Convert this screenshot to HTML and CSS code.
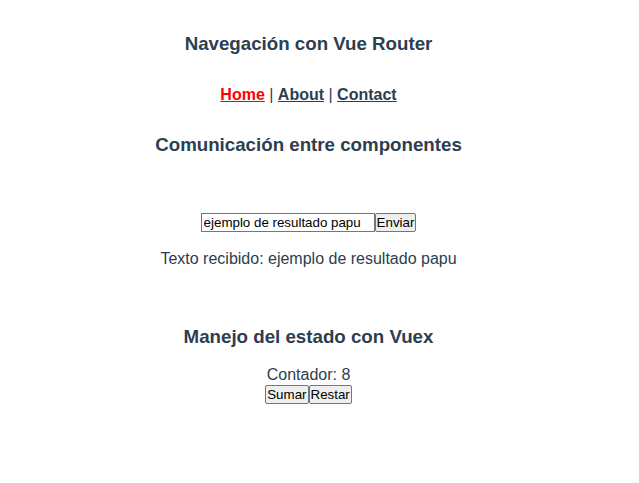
FILE: index.html
```html
<!DOCTYPE html>
<html lang="es">
<head>
<meta charset="utf-8">
<title>Vue App</title>
<link rel="stylesheet" href="styles.css">
</head>
<body>
<div class="app">
  <h3 class="title title-top">Navegación con Vue Router</h3>
  <nav class="nav">
    <a href="#" class="link active">Home</a> | <a href="#" class="link">About</a> | <a href="#" class="link">Contact</a>
  </nav>
  <section class="comm">
    <h3 class="title">Comunicación entre componentes</h3>
    <div class="form-row"><input class="field" type="text" value="ejemplo de resultado papu"><button class="btn">Enviar</button></div>
    <p class="received">Texto recibido: ejemplo de resultado papu</p>
  </section>
  <section class="store">
    <h3 class="title">Manejo del estado con Vuex</h3>
    <div class="counter">Contador: 8</div>
    <div class="btn-row"><button class="btn">Sumar</button><button class="btn">Restar</button></div>
  </section>
</div>
</body>
</html>
```
FILE: styles.css
```css
html, body {
  margin: 0;
  padding: 0;
  background: #ffffff;
}
.app {
  font-family: "Liberation Sans", Arial, Helvetica, sans-serif;
  color: #2c3e50;
  text-align: center;
  padding-top: 33px;
  padding-right: 22px;
}
.title {
  font-size: 18.72px;
  font-weight: bold;
  margin: 0;
  line-height: 21.5px;
}
.nav {
  margin-top: 31px;
  font-size: 16px;
  line-height: 18.5px;
}
.link {
  color: #2c3e50;
  font-weight: bold;
}
.link.active {
  color: #ff0000;
}
.comm {
  margin-top: 30px;
}
.form-row {
  margin-top: 57px;
  display: flex;
  justify-content: center;
}
.field {
  font-family: "Liberation Sans", Arial, sans-serif;
  font-size: 13.333px;
  width: 174px;
  height: 19px;
  box-sizing: border-box;
  padding: 1px 2px;
  border: 1px solid #767676;
  border-radius: 0;
  margin: 0;
  color: #000;
}
.btn {
  font-family: "Liberation Sans", Arial, sans-serif;
  font-size: 13.333px;
  padding: 1px 1px;
  height: 19px;
  box-sizing: border-box;
  border: 1px solid #767676;
  border-radius: 2px;
  background: #efefef;
  color: #000;
  margin: 0;
  line-height: 15px;
}
.received {
  margin: 18px 0 0;
  font-size: 16px;
  line-height: 18.5px;
}
.store {
  margin-top: 58px;
}
.counter {
  margin-top: 18.5px;
  font-size: 16px;
  line-height: 18.5px;
}
.btn-row {
  display: flex;
  justify-content: center;
}
```
